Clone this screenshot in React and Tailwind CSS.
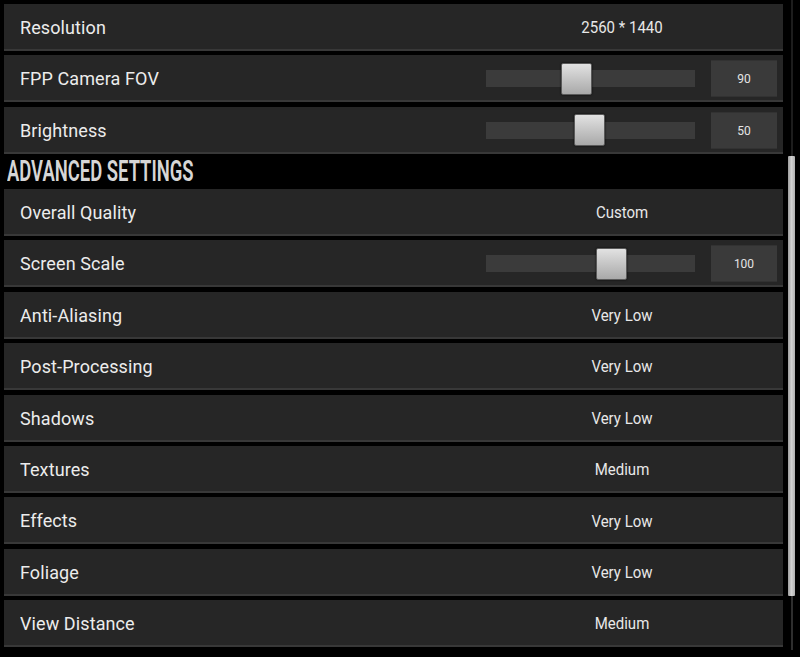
import React from 'react';

const rows = [
  { label: 'Resolution', value: '2560 * 1440' },
  { label: 'FPP Camera FOV', slider: 75, num: '90' },
  { label: 'Brightness', slider: 88, num: '50' },
  { header: 'ADVANCED SETTINGS' },
  { label: 'Overall Quality', value: 'Custom' },
  { label: 'Screen Scale', slider: 110, num: '100' },
  { label: 'Anti-Aliasing', value: 'Very Low' },
  { label: 'Post-Processing', value: 'Very Low' },
  { label: 'Shadows', value: 'Very Low' },
  { label: 'Textures', value: 'Medium' },
  { label: 'Effects', value: 'Very Low' },
  { label: 'Foliage', value: 'Very Low' },
  { label: 'View Distance', value: 'Medium' },
];

const Slider = ({ pos, num }) => (
  <div className="flex items-center w-full pl-[19px] pt-[2px]">
    <div className="relative w-[209px] h-[17px] bg-[#3b3b3b]">
      {/* thumb */}
      <div
        className="absolute top-1/2 -translate-y-1/2 w-[31px] h-[32px] rounded-[2px] border border-[#5a5a5a] bg-gradient-to-b from-[#e2e2e2] to-[#a9a9a9] shadow-[0_0_2px_rgba(0,0,0,0.8)]"
        style={{ left: pos }}
      />
    </div>
    <div className="ml-[16px] w-[66px] h-[33px] bg-[#3a3a3a] flex items-center justify-center text-[12px] text-[#e4e4e4] scale-y-110">
      {num}
    </div>
  </div>
);

const Row = ({ label, value, slider, num }) => (
  <div className="h-[47px] bg-[#262626] border-b-2 border-[#383838] flex items-center">
    <div className="flex-1 pl-4 pt-[2px] text-[18px] text-[#ececec] tracking-[0.1px] scale-y-105 origin-left">{label}</div>
    <div className="w-[310px] mr-[6px] flex items-center justify-center">
      {slider !== undefined ? (
        <Slider pos={slider} num={num} />
      ) : (
        <span className="pt-[2px] text-[15px] text-[#e8e8e8] scale-y-115">{value}</span>
      )}
    </div>
  </div>
);

export default function App() {
  return (
    <div className="w-[800px] h-[657px] bg-black flex overflow-hidden" style={{ fontFamily: 'Roboto, "Noto Sans", sans-serif' }}>
      <div className="w-[779px] ml-[4px] mt-[4px] flex flex-col gap-[4.4px]">
        {rows.map((r, i) =>
          r.header ? (
            <div key={i} className="h-[26.4px] bg-black pl-[3px] flex items-center">
              <span className="text-[29.5px] leading-[26.4px] font-semibold text-[#d6d6d6] whitespace-nowrap scale-x-[0.625] origin-left">
                {r.header}
              </span>
            </div>
          ) : (
            <Row key={i} {...r} />
          )
        )}
      </div>

      {/* scrollbar */}
      <div className="ml-[5px] w-[7px] flex flex-col items-center">
        <div className="w-[2px] h-[156px] bg-[#1d1d1d]" />
        <div className="w-[7px] h-[440px] rounded-[1px] bg-gradient-to-r from-[#9e9e9e] via-[#d2d2d2] to-[#b0b0b0]" />
        <div className="w-[2px] h-[54px] bg-[#2e2e2e]" />
      </div>
    </div>
  );
}
